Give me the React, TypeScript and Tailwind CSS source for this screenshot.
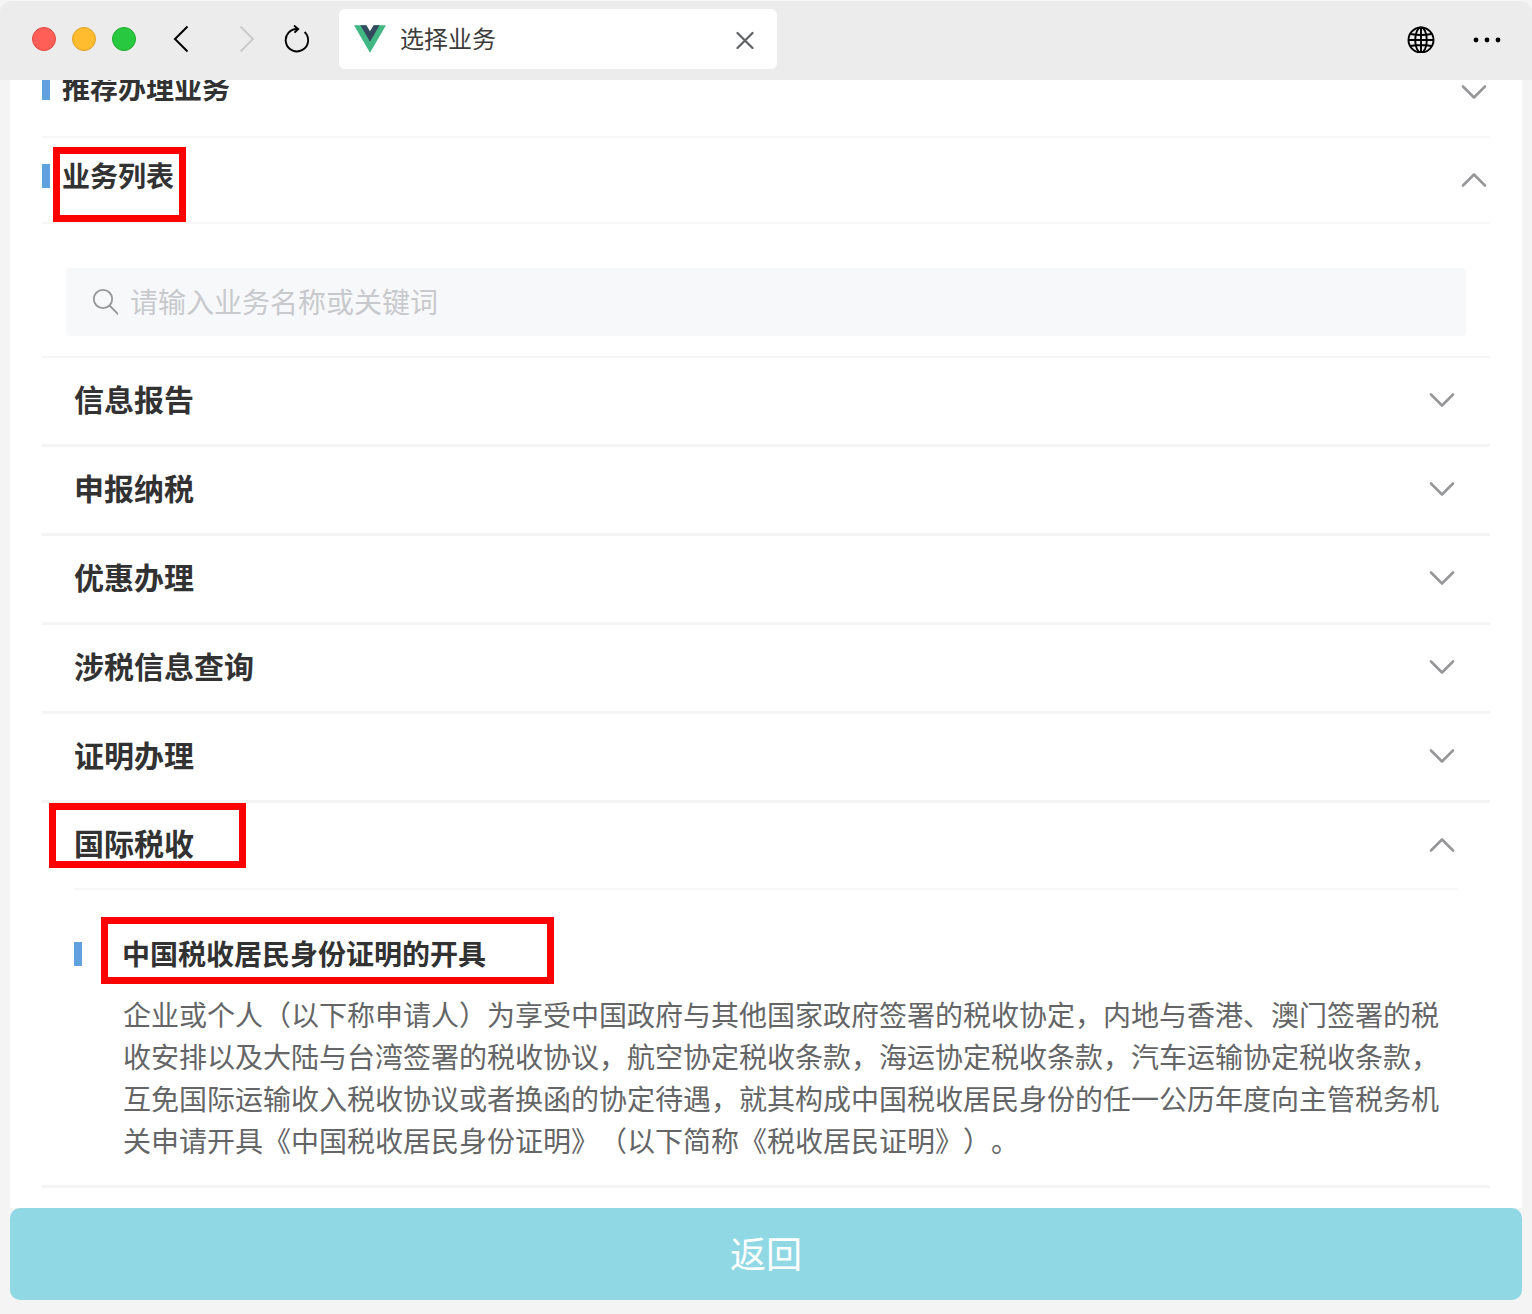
import React, { useState } from 'react';

interface Category {
    id: string;
    name: string;
}

const CATEGORIES: Category[] = [
    { id: 'info', name: '信息报告' },
    { id: 'declare', name: '申报纳税' },
    { id: 'discount', name: '优惠办理' },
    { id: 'query', name: '涉税信息查询' },
    { id: 'proof', name: '证明办理' },
];

const Chevron: React.FC<{ up?: boolean }> = ({ up }) => (
    <svg
        viewBox="0 0 28 28"
        className="w-7 h-7 shrink-0"
        fill="none"
        stroke="#969799"
        strokeWidth="2.6"
        strokeLinecap="round"
        strokeLinejoin="round"
    >
        <path d={up ? 'M3 19.5 14 8.5 25 19.5' : 'M3 8.5 14 19.5 25 8.5'} />
    </svg>
);

const TitleBar: React.FC = () => (
    <header className="h-20 shrink-0 bg-[#ececec] border-t border-[#f6f6f6] rounded-t-xl flex items-center pl-8 pr-7 pb-[3px]">
        <div className="flex gap-4">
            <span className="w-6 h-6 rounded-full bg-[#ff5f57] border border-[#e2463f]" />
            <span className="w-6 h-6 rounded-full bg-[#febc2e] border border-[#e0a125]" />
            <span className="w-6 h-6 rounded-full bg-[#28c840] border border-[#1dad2b]" />
        </div>
        <button aria-label="后退" className="ml-8">
            <svg viewBox="0 0 28 28" className="w-7 h-7" fill="none" stroke="#000" strokeWidth="2">
                <path d="M19.5 1.5 7 14 19.5 26.5" />
            </svg>
        </button>
        <button aria-label="前进" disabled className="ml-9">
            <svg viewBox="0 0 28 28" className="w-7 h-7" fill="none" stroke="#cacaca" strokeWidth="2">
                <path d="M8.5 1.5 21 14 8.5 26.5" />
            </svg>
        </button>
        <button aria-label="刷新" className="ml-[23px]">
            <svg viewBox="0 0 28 28" className="w-7 h-7" fill="none" stroke="#000" strokeWidth="1.9">
                <path d="M21.6 7A11.2 11.2 0 1 1 15 4" />
                <path d="M11 .6 15.200 4 11.500 7.600" />
            </svg>
        </button>

        <div className="ml-7 h-15 w-[438px] bg-white rounded-md flex items-center pl-[15px] pr-4">
            <svg viewBox="0 0 261.76 226.69" className="w-8 h-7 shrink-0">
                <path fill="#41b883" d="M161.096.001l-30.225 52.351L100.647.001H-.005l130.877 226.688L261.749.001z" />
                <path fill="#34495e" d="M161.096.001l-30.225 52.351L100.647.001H52.346l78.526 136.01L209.398.001z" />
            </svg>
            <h1 className="ml-3.5 flex-1 pb-0.5 text-2xl text-[#3c3c3c]">选择业务</h1>
            <button aria-label="关闭标签页" className="mr-1.5">
                <svg viewBox="0 0 20 20" className="w-5 h-5" fill="none" stroke="#5f6163" strokeWidth="2.2" strokeLinecap="round">
                    <path d="M2.5 4 17.5 19M17.5 4 2.5 19" />
                </svg>
            </button>
        </div>

        <button aria-label="语言" className="ml-auto">
            <svg viewBox="0 0 28 28" className="w-7 h-7" fill="none" stroke="#000" strokeWidth="1.9">
                <circle cx="14" cy="15" r="12.5" />
                <ellipse cx="14" cy="15" rx="5.8" ry="12.5" />
                <path d="M14 2.5v25M1.500 15h25M3.500 9c6 1.200 15 1.200 21 0M3.500 21c6-1.200 15-1.200 21 0" />
            </svg>
        </button>
        <button aria-label="更多" className="ml-[35px]">
            <svg viewBox="0 0 34 28" className="w-[34px] h-7" fill="#000">
                <circle cx="6" cy="15" r="2.4" />
                <circle cx="17" cy="15" r="2.4" />
                <circle cx="28" cy="15" r="2.4" />
            </svg>
        </button>
    </header>
);

interface SectionHeaderProps {
    title: string;
    open?: boolean;
    marked?: boolean;
    onClick?: () => void;
}

const SectionHeader: React.FC<SectionHeaderProps> = ({ title, open, marked, onClick }) => (
    <button
        onClick={onClick}
        aria-expanded={!!open}
        className="w-full h-[84px] flex items-center justify-between pr-0.5 text-left"
    >
        <span className="relative flex items-center gap-3 mb-2">
            <span className="w-2 h-6 bg-[#61a1e0]" />
            <span className="pb-0.5 text-[28px] leading-[38px] font-bold">{title}</span>
            {marked && <span className="absolute left-[11px] -top-[9px] w-[133px] h-[75px] border-[7px] border-[#ff0000]" />}
        </span>
        <Chevron up={open} />
    </button>
);

export default function App() {
    const [listOpen, setListOpen] = useState(true);
    const [taxOpen, setTaxOpen] = useState(true);
    const [keyword, setKeyword] = useState('');

    return (
        <div className="min-h-screen flex flex-col bg-[#f4f4f4] text-[#323233] font-['Noto_Sans_CJK_SC',sans-serif]">
            <TitleBar />

            <main className="flex-1 mx-2.5 px-8 bg-white overflow-hidden">
                {/* scrolled slightly, so the first section runs under the title bar */}
                <div className="-mt-[30px] pb-0.5 border-b-2 border-[#f7f7f7]">
                    <SectionHeader title="推荐办理业务" />
                </div>
                <div className="border-b-2 border-[#f7f7f7]">
                    <SectionHeader title="业务列表" open={listOpen} marked onClick={() => setListOpen(!listOpen)} />
                </div>

                {listOpen && (
                    <>
                        <div className="pt-11 px-6 pb-5 border-b-2 border-[#f5f5f5]">
                            <label className="h-[68px] px-6 rounded bg-[#f7f8fa] flex items-center gap-3">
                                <svg viewBox="0 0 28 28" className="w-7 h-7 shrink-0" fill="none" stroke="#969799" strokeWidth="1.8">
                                    <circle cx="13" cy="11" r="9.2" />
                                    <path d="M19.500 17.500 28.500 26.500" />
                                </svg>
                                <input
                                    type="search"
                                    value={keyword}
                                    onChange={(e) => setKeyword(e.target.value)}
                                    placeholder="请输入业务名称或关键词"
                                    className="flex-1 h-12 pb-0.5 bg-transparent text-[28px] outline-none placeholder:text-[#c8c9cc]"
                                />
                            </label>
                        </div>

                        {CATEGORIES.map((c) => (
                            <button
                                key={c.id}
                                className="w-full h-[89px] pl-8 pr-[34px] pb-0.5 border-b-3 border-[#f4f4f5] flex items-center justify-between text-left"
                            >
                                <span className="pb-1 text-[30px] font-bold">{c.name}</span>
                                <Chevron />
                            </button>
                        ))}

                        {/* International tax */}
                        <section className="px-8 border-b-3 border-[#f4f4f5]">
                            <button
                                onClick={() => setTaxOpen(!taxOpen)}
                                aria-expanded={taxOpen}
                                className="relative w-full h-[87px] pr-0.5 pb-0.5 border-b-2 border-[#f7f7f7] flex items-center justify-between text-left"
                            >
                                <span className="pb-1 text-[30px] font-bold">国际税收</span>
                                <Chevron up={taxOpen} />
                                <span className="absolute -left-[25px] top-0 w-[197px] h-[65px] border-[7px] border-[#ff0000]" />
                            </button>

                            {taxOpen && (
                                <article className="pt-11 pb-6">
                                    <div className="relative flex items-center gap-10">
                                        <span className="w-2 h-6 bg-[#61a1e0]" />
                                        <h3 className="pb-0.5 text-[28px] leading-[38px] font-bold">中国税收居民身份证明的开具</h3>
                                        <span className="absolute left-[27px] -top-[17px] w-[453px] h-[67px] border-[7px] border-[#ff0000]" />
                                    </div>
                                    <p className="mt-[19px] pl-[49px] pr-4 text-[28px] leading-[42px] text-[#646566] [text-spacing-trim:space-all]">
                                        企业或个人（以下称申请人）为享受中国政府与其他国家政府签署的税收协定，内地与香港、澳门签署的税收安排以及大陆与台湾签署的税收协议，航空协定税收条款，海运协定税收条款，汽车运输协定税收条款，互免国际运输收入税收协议或者换函的协定待遇，就其构成中国税收居民身份的任一公历年度向主管税务机关申请开具《中国税收居民身份证明》（以下简称《税收居民证明》）。
                                    </p>
                                </article>
                            )}
                        </section>
                    </>
                )}
            </main>

            <footer className="px-2.5 pb-3.5">
                <button className="w-full h-[92px] pb-1 rounded-[10px] bg-[#90d8e4] text-white text-4xl">返回</button>
            </footer>
        </div>
    );
}
